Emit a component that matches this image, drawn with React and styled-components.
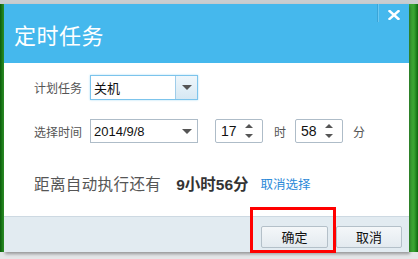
import React from 'react'
import styled, { createGlobalStyle } from 'styled-components'

const Global = createGlobalStyle`
  html, body { margin: 0; padding: 0; }
  body {
    width: 418px;
    height: 259px;
    overflow: hidden;
    font-family: "Noto Sans CJK SC", "Liberation Sans", sans-serif;
  }
`

const Screen = styled.div`
  position: relative;
  width: 418px;
  height: 259px;
  box-sizing: border-box;
  padding: 4px 9px 7px 4px;
  background:
    linear-gradient(#c9cdd0, #c9cdd0) top / 100% 4px no-repeat,
    linear-gradient(#e4e6e8, #e4e6e8) bottom / 100% 7px no-repeat,
    linear-gradient(90deg, #0b5a0b 0%, #2f9a2a 1%, #3aa533 99%, #0e6a10 100%);
`

const Dialog = styled.div`
  width: 405px;
  height: 248px;
  display: flex;
  flex-direction: column;
  background: #fff;
  box-shadow: 1px 2px 3px rgba(0, 0, 0, 0.35);
`

const TitleBar = styled.div`
  height: 59px;
  flex: none;
  display: flex;
  align-items: center;
  justify-content: space-between;
  padding-left: 10px;
  background: #45b8ed;
`

const Title = styled.div`
  color: #fff;
  font-size: 22px;
  letter-spacing: 0.5px;
  margin-top: 1px;
`

const CloseArea = styled.div`
  align-self: flex-start;
  display: flex;
  height: 18px;
`

const Sep = styled.div`
  width: 1px;
  height: 18px;
  background: #3aa4d8;
  box-shadow: 1px 0 0 #6cc8f2;
`

const Close = styled.div`
  width: 31px;
  display: flex;
  align-items: center;
  justify-content: center;
  padding-top: 3px;
`

const Body = styled.div`
  flex: 1;
  padding: 12px 0 0 30px;
  display: flex;
  flex-direction: column;
`

const Row = styled.div`
  display: flex;
  align-items: center;
  height: ${p => p.h || 24}px;
  margin-top: ${p => p.mt || 0}px;
  margin-bottom: ${p => p.mb || 0}px;
`

const Label = styled.span`
  font-size: 12px;
  color: #555;
  width: 56px;
`

const Select = styled.div`
  width: ${p => p.w}px;
  height: ${p => p.h}px;
  box-sizing: border-box;
  border: 1px solid ${p => (p.focus ? '#7cc4ec' : '#aebcc8')};
  box-shadow: ${p => (p.focus ? '0 0 2px #a8dcf6' : 'none')};
  display: flex;
  align-items: center;
  background: #fff;
`

const SelText = styled.span`
  flex: 1;
  padding-left: 3px;
  font-size: 13px;
  color: #111;
  font-family: ${p => (p.num ? '"Liberation Sans", sans-serif' : 'inherit')};
`

const ArrowBtn = styled.div`
  width: 21px;
  height: 100%;
  display: flex;
  align-items: center;
  justify-content: center;
  border-left: ${p => (p.boxed ? '1px solid #9fcdea' : 'none')};
  background: ${p => (p.boxed ? 'linear-gradient(#eef6fb, #d6e8f3)' : 'transparent')};
`

const Arrow = styled.div`
  width: 0;
  height: 0;
  border-left: 5px solid transparent;
  border-right: 5px solid transparent;
  border-top: 5px solid #555;
`

const Spin = styled.div`
  width: 48px;
  height: 24px;
  margin-left: ${p => p.ml || 0}px;
  box-sizing: border-box;
  border: 1px solid #aebcc8;
  border-radius: 2px;
  display: flex;
  align-items: center;
  padding-left: 5px;
`

const SpinVal = styled.span`
  flex: 1;
  font-family: "Liberation Sans", sans-serif;
  font-size: 14px;
  color: #111;
`

const SpinArrows = styled.div`
  width: 14px;
  display: flex;
  flex-direction: column;
  gap: 6px;
  align-items: center;
  margin-right: 6px;
`

const Tri = styled.div`
  width: 0;
  height: 0;
  border-left: 4px solid transparent;
  border-right: 4px solid transparent;
  ${p => (p.up ? 'border-bottom: 4px solid #555;' : 'border-top: 4px solid #555;')}
`

const Unit = styled.span`
  font-size: 12px;
  color: #555;
  margin-left: ${p => p.ml}px;
`

const Countdown = styled.span`
  font-size: 15.5px;
  color: #555;
  letter-spacing: 0.4px;
`

const Remain = styled.span`
  font-size: 15.5px;
  font-weight: bold;
  color: #333;
  margin-left: 15px;
  font-family: "Liberation Sans", "Noto Sans CJK SC", sans-serif;
`

const Link = styled.span`
  font-size: 12.5px;
  color: #2d8ad8;
  margin-left: 12px;
`

const Footer = styled.div`
  height: 35px;
  flex: none;
  border-top: 1px solid #cdd9e2;
  background: #e2ebf1;
  display: flex;
  align-items: center;
  justify-content: flex-end;
  padding-right: 7px;
  gap: 8px;
`

const Button = styled.div`
  width: ${p => p.w}px;
  height: 22px;
  box-sizing: border-box;
  border: 1px solid #b4c0c9;
  border-radius: 2px;
  background: linear-gradient(#f4f7f9, #e3eaef);
  display: flex;
  align-items: center;
  justify-content: center;
  font-size: 13px;
  color: #111;
  margin-top: 4px;
`

const Highlight = styled.div`
  position: absolute;
  left: 250px;
  top: 207px;
  width: 86px;
  height: 46px;
  box-sizing: border-box;
  border: 3px solid #ff0000;
  pointer-events: none;
`

export default function App() {
  return (
    <Screen>
      <Global />
      <Dialog>
        <TitleBar>
          <Title>定时任务</Title>
          <CloseArea>
            <Sep />
            <Close>
              <svg width="12" height="10" viewBox="0 0 12 10">
                <path d="M1.5 1 L10.5 9 M10.5 1 L1.5 9" stroke="#fff" strokeWidth="2.4" strokeLinecap="square" />
              </svg>
            </Close>
          </CloseArea>
        </TitleBar>
        <Body>
          <Row mb={20}>
            <Label>计划任务</Label>
            <Select w={108} h={25} focus>
              <SelText>关机</SelText>
              <ArrowBtn boxed><Arrow /></ArrowBtn>
            </Select>
          </Row>
          <Row>
            <Label>选择时间</Label>
            <Select w={108} h={24}>
              <SelText num>2014/9/8</SelText>
              <ArrowBtn><Arrow /></ArrowBtn>
            </Select>
            <Spin ml={17}>
              <SpinVal>17</SpinVal>
              <SpinArrows><Tri up /><Tri /></SpinArrows>
            </Spin>
            <Unit ml={11}>时</Unit>
            <Spin ml={9}>
              <SpinVal>58</SpinVal>
              <SpinArrows><Tri up /><Tri /></SpinArrows>
            </Spin>
            <Unit ml={10}>分</Unit>
          </Row>
          <Row h={30} mt={25}>
            <Countdown>距离自动执行还有</Countdown>
            <Remain>9小时56分</Remain>
            <Link>取消选择</Link>
          </Row>
        </Body>
        <Footer>
          <Button w={67}>确定</Button>
          <Button w={66}>取消</Button>
        </Footer>
      </Dialog>
      <Highlight />
    </Screen>
  )
}
